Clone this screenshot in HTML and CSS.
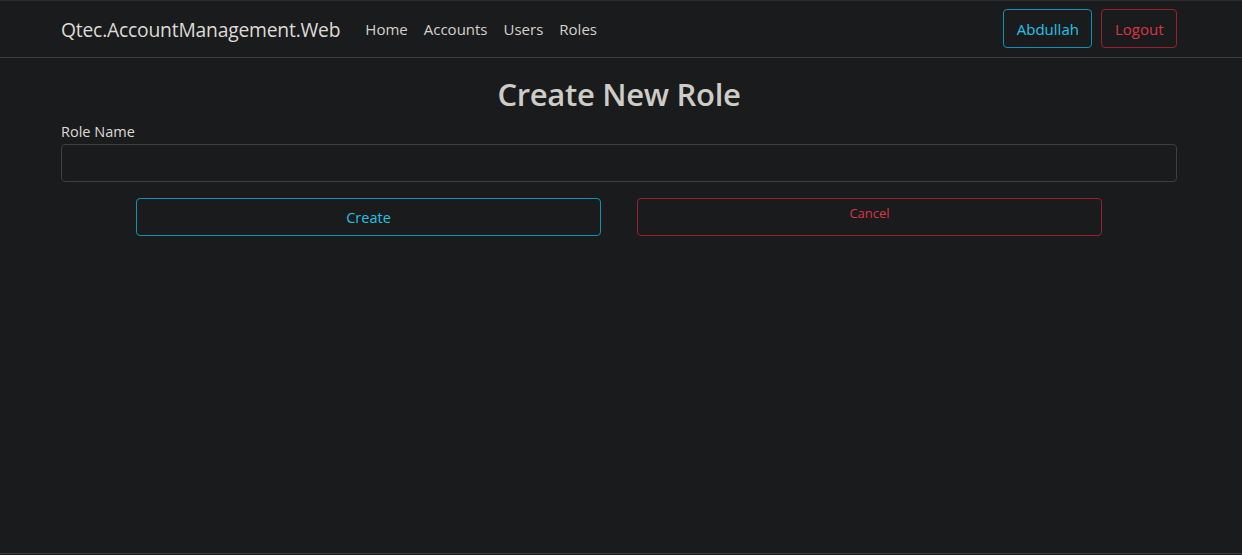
FILE: index.html
```html
<!DOCTYPE html>
<html lang="en">
<head>
<meta charset="utf-8">
<title>Create New Role</title>
<link rel="stylesheet" href="styles.css">
</head>
<body>
<header class="navbar">
  <div class="container nav-inner">
    <a class="brand" href="#">Qtec.AccountManagement.Web</a>
    <nav class="nav-links">
      <a href="#">Home</a>
      <a href="#">Accounts</a>
      <a href="#">Users</a>
      <a href="#">Roles</a>
    </nav>
    <div class="nav-actions">
      <a class="btn btn-info" href="#">Abdullah</a>
      <a class="btn btn-danger" href="#">Logout</a>
    </div>
  </div>
</header>
<main class="container main">
  <h1 class="title">Create New Role</h1>
  <form class="form">
    <label class="label" for="role">Role Name</label>
    <input class="input" id="role" type="text">
    <div class="actions">
      <button class="btn btn-info wide" type="button">Create</button>
      <a class="btn btn-danger wide small" href="#">Cancel</a>
    </div>
  </form>
</main>
<div class="footer-line"></div>
</body>
</html>
```
FILE: styles.css
```css
* { box-sizing: border-box; }
html, body { height: 100%; }
body {
  margin: 0;
  background: #1a1b1d;
  color: #dedad5;
  font-family: "Open Sans", "Noto Sans", sans-serif;
  font-size: 15px;
  border-top: 1px solid #2a2c2f;
  display: flex;
  flex-direction: column;
}
a { text-decoration: none; }
.container {
  padding-left: 61px;
  width: 1177px;
}
.navbar {
  height: 57px;
  border-bottom: 1px solid #3a3c3f;
}
.nav-inner {
  display: flex;
  align-items: center;
  height: 56px;
}
.brand {
  color: #dedad5;
  font-size: 19.3px;
  margin-right: 25px;
  letter-spacing: -0.2px;
}
.nav-links { display: flex; gap: 16px; }
.nav-links a { color: #d5d1cb; font-size: 15px; }
.nav-actions { margin-left: auto; display: flex; gap: 9px; align-self: flex-start; padding-top: 8px; }
.btn {
  display: inline-flex;
  align-items: center;
  justify-content: center;
  border: 1px solid;
  border-radius: 4px;
  background: transparent;
  font-family: inherit;
  font-size: 15px;
  height: 39px;
  padding: 0 12px;
  cursor: pointer;
}
.btn-info { color: #23c3e8; border-color: #0d93b3; }
.btn-danger { color: #dc3545; border-color: #9c1f2b; }
.nav-actions .btn-info { padding: 0 12.5px; }
.nav-actions .btn-danger { padding: 0 12.5px; }
.main { flex: 1; }
.title {
  text-align: center;
  font-size: 31px;
  font-weight: 600;
  color: #cfcbc5;
  margin: 15px 0 7px;
  line-height: 42px;
  letter-spacing: -0.3px;
}
.form { display: flex; flex-direction: column; }
.label { font-size: 14.5px; line-height: 20px; margin-bottom: 2px; color: #dedad5; }
.input {
  height: 38px;
  width: 100%;
  background: #1a1b1d;
  border: 1px solid #3c3e41;
  border-radius: 4px;
  color: #dedad5;
  font-family: inherit;
}
.actions {
  display: flex;
  justify-content: center;
  gap: 36px;
  margin-top: 16px;
}
.wide { width: 465px; height: 38px; font-size: 14.5px; }
.small { font-size: 13px; align-items: flex-start; padding-top: 5px; }
.footer-line {
  height: 2px;
  border-top: 1px solid #3a3c3f;
  flex: none;
}
```
